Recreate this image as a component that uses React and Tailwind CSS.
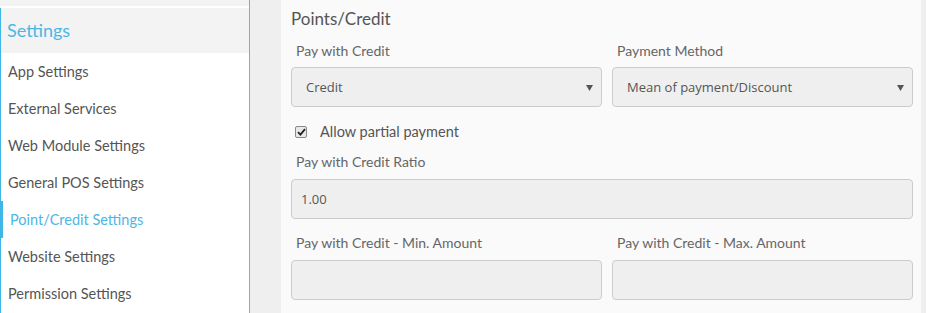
import React from 'react';

const items = [
  'App Settings',
  'External Services',
  'Web Module Settings',
  'General POS Settings',
  'Point/Credit Settings',
  'Website Settings',
  'Permission Settings',
];

function Caret() {
  return (
    <svg width="7" height="6" viewBox="0 0 7 6" className="absolute right-[8px] top-[17px]">
      <path d="M0 0 H7 L3.5 6 Z" fill="#555" />
    </svg>
  );
}

function Select({ value, className }) {
  return (
    <div
      className={`relative h-[40px] rounded-[4px] border border-[#cccccc] bg-[#efefef] pl-[14px] font-['Open_Sans',sans-serif] text-[13px] leading-[38px] text-[#555] ${className}`}
    >
      {value}
      <Caret />
    </div>
  );
}

function Input({ value, className }) {
  return (
    <div
      className={`h-[40px] rounded-[4px] border border-[#cccccc] bg-[#efefef] pl-[9px] font-['Open_Sans',sans-serif] text-[13px] leading-[38px] text-[#555] ${className}`}
    >
      {value}
    </div>
  );
}

function Label({ children, className }) {
  return <div className={`pl-[5px] text-[14px] leading-[20px] text-[#666] ${className}`}>{children}</div>;
}

export default function App() {
  return (
    <div className="flex h-[313px] w-[926px] overflow-hidden bg-[#efefef] font-['Lato','Open_Sans',sans-serif]">
      {/* Sidebar */}
      <aside className="flex w-[250px] shrink-0 flex-col border-r border-[#5fb9de] bg-white">
        <div className="h-[6px] bg-[#f3f3f3]" />
        <div className="h-[2px] bg-white" />
        <div className="flex-1 border-l border-[#3fb6e6]">
          <div className="h-[45px] bg-[#f3f3f3] pl-[6px] text-[18px] leading-[45px] text-[#4cb6e4]">Settings</div>
          {items.map((label) => {
            const active = label === 'Point/Credit Settings';
            return (
              <div
                key={label}
                className={`h-[37px] text-[14.5px] leading-[37px] ${
                  active ? '-ml-px border-l-[3px] border-[#3fb6e6] pl-[7px] text-[#4cb6e4]' : 'pl-[7px] text-[#555]'
                }`}
              >
                {label}
              </div>
            );
          })}
        </div>
      </aside>

      {/* Main */}
      <main className="flex-1 pl-[31px] pr-[5px]">
        <div className="h-full bg-[#fafafa] pl-[10px] pr-[8px]">
          <h2 className="pt-[7px] text-[17px] leading-[24px] text-[#555]">Points/Credit</h2>

          <div className="mt-[10px] flex gap-[10px]">
            <div className="w-[311px]">
              <Label>Pay with Credit</Label>
              <Select value="Credit" className="mt-[6px]" />
            </div>
            <div className="w-[301px]">
              <Label>Payment Method</Label>
              <Select value="Mean of payment/Discount" className="mt-[6px]" />
            </div>
          </div>

          <div className="mt-[15px] flex h-[20px] items-center pl-[4px] text-[14.5px] text-[#555]">
            <span className="flex h-[12px] w-[12px] items-center justify-center rounded-[2px] border border-[#8a8a8a] bg-[#e8e8e8]">
              <svg width="9" height="8" viewBox="0 0 9 8">
                <path d="M1 4.2 L3.4 6.6 L8 1.2" fill="none" stroke="#222" strokeWidth="1.8" />
              </svg>
            </span>
            <span className="ml-[13px]">Allow partial payment</span>
          </div>

          <Label className="mt-[10px]">Pay with Credit Ratio</Label>
          <Input value="1.00" className="mt-[7px]" />

          <div className="mt-[14px] flex gap-[10px]">
            <div className="w-[311px]">
              <Label>Pay with Credit - Min. Amount</Label>
              <Input className="mt-[7px]" />
            </div>
            <div className="w-[301px]">
              <Label>Pay with Credit - Max. Amount</Label>
              <Input className="mt-[7px]" />
            </div>
          </div>
        </div>
      </main>
    </div>
  );
}
